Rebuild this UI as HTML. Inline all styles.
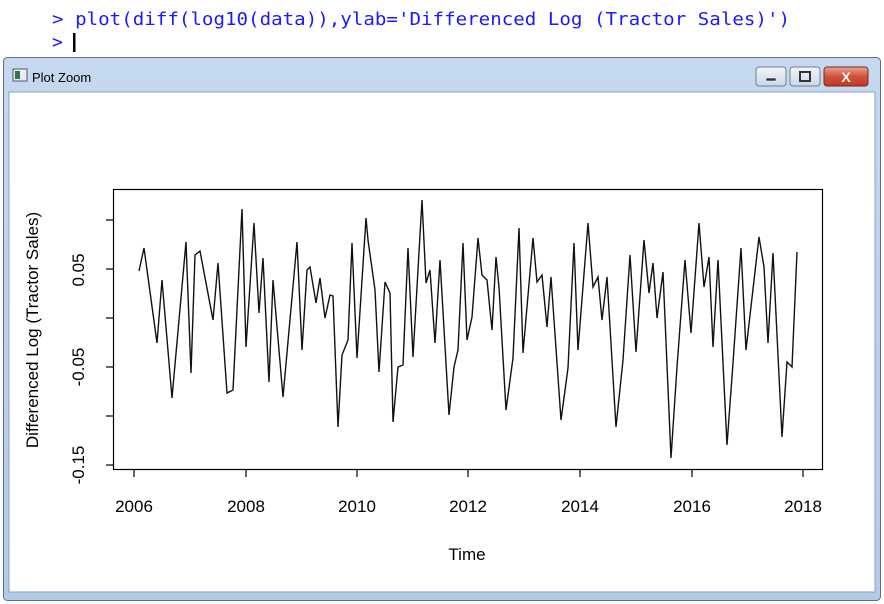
<!DOCTYPE html>
<html><head><meta charset="utf-8"><style>
html,body{margin:0;padding:0;background:#fff;}
body{width:884px;height:604px;overflow:hidden;position:relative;font-family:"Liberation Sans",sans-serif;}
</style></head><body>
<svg width="884" height="604" viewBox="0 0 884 604" xmlns="http://www.w3.org/2000/svg" style="position:absolute;left:0;top:0">
<defs>
<linearGradient id="tb" x1="0" y1="0" x2="0" y2="1">
<stop offset="0" stop-color="#c5d8ee"/><stop offset="1" stop-color="#b3cbe6"/>
</linearGradient>
<linearGradient id="cl" x1="0" y1="0" x2="0" y2="1">
<stop offset="0" stop-color="#e8a496"/><stop offset="0.5" stop-color="#d0523b"/><stop offset="1" stop-color="#c23a22"/>
</linearGradient>
<linearGradient id="bt" x1="0" y1="0" x2="0" y2="1">
<stop offset="0" stop-color="#f3f6fa"/><stop offset="1" stop-color="#c9d7e8"/>
</linearGradient>
</defs>
<text x="52" y="25" font-family="'DejaVu Sans Mono','Liberation Mono',monospace" font-size="18" fill="#1a1aff" textLength="738" lengthAdjust="spacingAndGlyphs">&gt; plot(diff(log10(data)),ylab='Differenced Log (Tractor Sales)')</text>
<text x="52" y="48" font-family="'DejaVu Sans Mono','Liberation Mono',monospace" font-size="18" fill="#1a1aff">&gt;</text>
<rect x="73" y="33" width="2.5" height="19" fill="#000"/>
<rect x="3.5" y="57.5" width="877" height="543" rx="4" fill="url(#tb)" stroke="#5a6f88"/>
<rect x="9" y="92" width="866" height="500" fill="#fff" stroke="#8ea2ba"/>
<rect x="13" y="69" width="14" height="12" fill="#e8eef5" stroke="#556"/>
<rect x="15" y="71" width="5" height="8" fill="#2c7a4a"/>
<text x="32" y="82" font-size="13" fill="#000">Plot Zoom</text>
<rect x="756" y="67" width="30" height="19" rx="3" fill="url(#bt)" stroke="#6d7f96"/>
<rect x="766" y="78" width="10" height="3" fill="#333" stroke="#fff" stroke-width="0.5"/>
<rect x="790" y="67" width="30" height="19" rx="3" fill="url(#bt)" stroke="#6d7f96"/>
<rect x="800" y="72" width="10" height="9" fill="none" stroke="#333" stroke-width="2"/>
<rect x="824" y="67" width="44" height="19" rx="3" fill="url(#cl)" stroke="#7a2a1c"/>
<text x="846" y="82" font-size="14" font-weight="bold" fill="#fff" text-anchor="middle">X</text>
<rect x="113.5" y="189.5" width="709" height="280" fill="none" stroke="#000" stroke-width="1.2"/>
<g stroke="#000" stroke-width="1.2">
<line x1="106" y1="220" x2="113" y2="220"/><line x1="106" y1="269" x2="113" y2="269"/><line x1="106" y1="318" x2="113" y2="318"/><line x1="106" y1="367" x2="113" y2="367"/><line x1="106" y1="416" x2="113" y2="416"/><line x1="106" y1="465" x2="113" y2="465"/>
<line x1="134" y1="470" x2="134" y2="477"/><line x1="246" y1="470" x2="246" y2="477"/><line x1="357" y1="470" x2="357" y2="477"/><line x1="468" y1="470" x2="468" y2="477"/><line x1="580" y1="470" x2="580" y2="477"/><line x1="692" y1="470" x2="692" y2="477"/><line x1="803" y1="470" x2="803" y2="477"/>
</g>
<g font-size="17" fill="#000" text-anchor="middle">
<text x="134" y="512">2006</text><text x="246" y="512">2008</text><text x="357" y="512">2010</text><text x="468" y="512">2012</text><text x="580" y="512">2014</text><text x="692" y="512">2016</text><text x="803" y="512">2018</text>
<text x="467" y="560">Time</text>
<text transform="translate(84,270) rotate(-90)">0.05</text>
<text transform="translate(84,367) rotate(-90)">-0.05</text>
<text transform="translate(84,465) rotate(-90)">-0.15</text>
<text transform="translate(38,330) rotate(-90)">Differenced Log (Tractor Sales)</text>
</g>
<polyline fill="none" stroke="#111" stroke-width="1.4" points="139,271 144,248 157,343 162,280 172,398 186,242 191,373 195,255 200,251 213,320 218,263 227,393 233,390 242,209 246,347 254,223 259,313 263,258 269,382 273,280 283,397 297,242 302,350 307,270 310,267 316,303 320,278 325,318 330,295 333,296 338,427 342,355 348,340 352,243 357,358 366,218 368,240 375,290 379,372 385,282 390,293 393,422 398,367 403,365 408,248 413,357 422,200 426,283 430,270 435,343 440,260 449,415 454,367 458,350 463,243 467,340 472,317 478,238 482,275 487,280 492,330 496,257 499,287 506,410 513,358 519,228 523,353 533,238 537,282 542,275 547,327 551,277 561,420 568,368 574,243 578,350 588,223 593,287 598,277 602,320 607,277 616,427 623,360 630,255 636,352 644,240 649,293 653,263 657,318 663,272 671,458 677,367 685,260 691,333 699,223 704,287 709,257 713,347 718,260 727,445 733,363 741,248 746,350 759,237 764,267 768,343 773,253 782,437 787,362 792,367 797,252"/>
</svg>
</body></html>
